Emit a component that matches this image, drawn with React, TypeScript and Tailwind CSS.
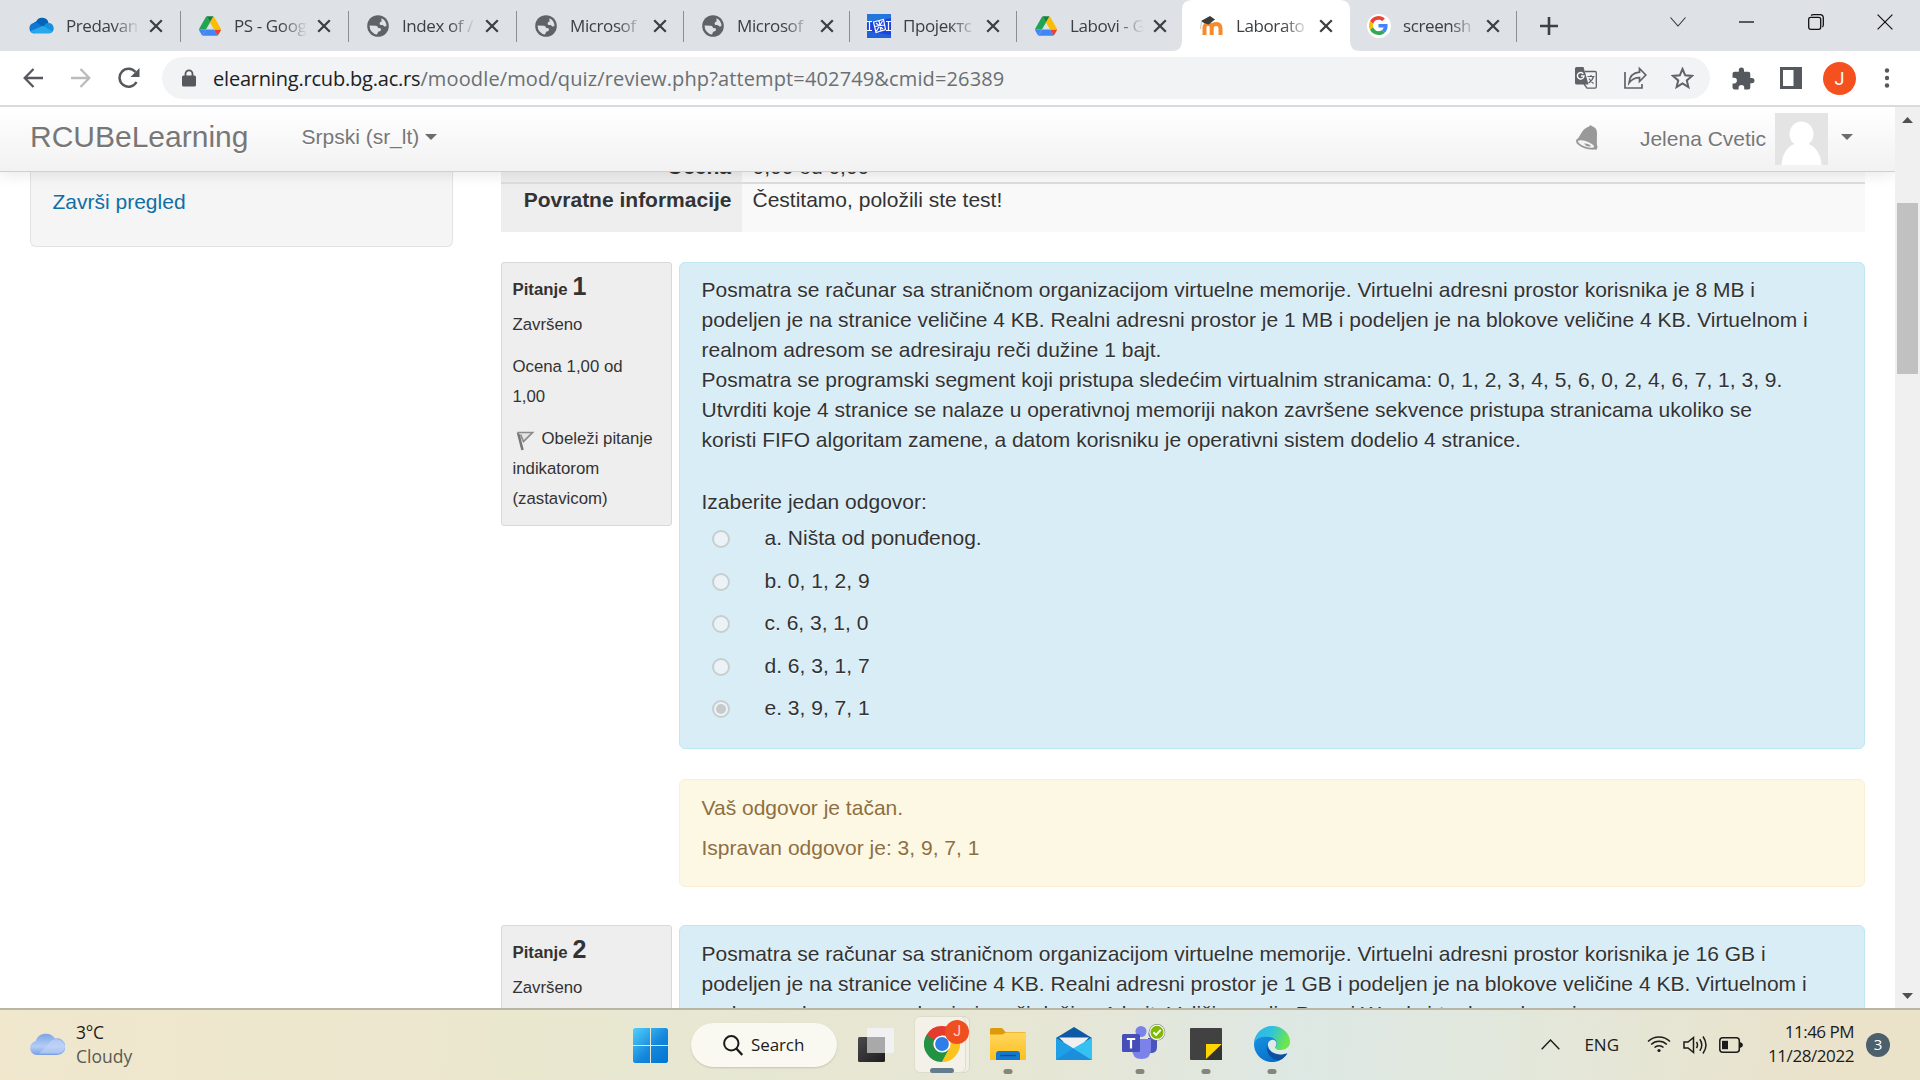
import type { ReactNode } from "react";

/* ---------- Favicons ---------- */

const OneDrive = () => (
  <svg width="25" height="17" viewBox="0 0 25 17">
    <path d="M8 4.500A7 7 0 0 1 19.500 6L13 11 4 6.500A6 6 0 0 1 8 4.500z" fill="#0364b8" />
    <path d="M7 5A6.500 6.500 0 0 1 19.500 6L14 10z" fill="#0364b8" />
    <path d="M5 6a5.600 5.600 0 0 1 4.500.8L17 11.500 5 16.500A5.300 5.300 0 0 1 5 6z" fill="#0f78d4" />
    <path d="M19.500 6.100A5.300 5.300 0 0 1 22 16l-7.500-6 2-3.200a6 6 0 0 1 3-.7z" fill="#1490df" />
    <path d="M1.500 14 14.200 8.800l9.300 5.700a4.500 4.500 0 0 1-3.500 2H6a6 6 0 0 1-4.500-2.500z" fill="#28a8ea" />
  </svg>
);

const Drive = () => (
  <svg width="22" height="20" viewBox="0 0 87.3 78">
    <path d="M6.600 66.850l3.850 6.650c.8 1.400 1.950 2.500 3.300 3.300l13.750-23.800H0c0 1.550.4 3.100 1.200 4.500z" fill="#4285f4" />
    <path d="M43.650 25 29.900 1.200c-1.350.8-2.500 1.900-3.300 3.300L1.200 48.500A9 9 0 0 0 0 53h27.500z" fill="#21a453" />
    <path d="M73.550 76.800c1.350-.8 2.500-1.900 3.300-3.300L86.100 57.500c.8-1.400 1.200-2.950 1.200-4.500H59.800l5.850 11.500z" fill="#ea4335" />
    <path d="M43.650 25 57.400 1.200C56.050.4 54.500 0 52.900 0H34.400c-1.600 0-3.150.45-4.500 1.200z" fill="#188038" />
    <path d="M59.800 53H27.500L13.750 76.800c1.350.8 2.900 1.200 4.500 1.200h50.800c1.600 0 3.150-.45 4.500-1.200z" fill="#4285f4" />
    <path d="M73.400 26.500 60.700 4.500c-.8-1.400-1.950-2.500-3.300-3.300L43.650 25 59.800 53h27.450c0-1.550-.4-3.100-1.200-4.500z" fill="#fbbc04" />
  </svg>
);

const Globe = () => (
  <svg width="22" height="22" viewBox="0 0 22 22">
    <circle cx="11" cy="11" r="10.800" fill="#5f6368" />
    <path d="M14.500 3.200c3 1.400 5 4.300 5 7.800-.7.500-1.500.6-2.400.3-.6-1-1.800-1.300-3.400-1.200-.9-.4-1.200-1.100-1-2 .2-1 .9-1.500 2-1.600-.3-1.200-.4-2.300-.2-3.300z" fill="#dee1e6" />
    <path d="M2.600 10.500l6.200.300c1.500.2 2.200 1 2.200 2.200l2.300.3c.9.500.9 1.800.1 2.600l-2.200.8-1.200 2.700A8.600 8.600 0 0 1 2.600 10.500z" fill="#dee1e6" />
  </svg>
);

const Project = () => (
  <svg width="24" height="24" viewBox="0 0 24 24">
    <rect width="24" height="24" fill="#1d44dc" />
    <path d="M0 0h24v4L0 9z" fill="#2276dc" />
    <path d="M0 24h24v-3L0 17z" fill="#1f62dc" />
    <g fill="none" stroke="#fff" strokeWidth="1.200">
      <path d="M0 7.500h5M2.500 7.500v9M0 16.500h5M19 7.500h5M21.500 7.500v9M19 16.500h5" />
      <path d="M6.500 8l10-2.500 2 10-9.500 3zM9 9l7 6M15.500 7l-6 10M7.500 12.500l10-1.500M12 6.500l2 10.500" />
    </g>
  </svg>
);

const Moodle = () => (
  <svg width="25" height="20" viewBox="0 0 25 20">
    <path d="M5.500 19v-7.500c0-5 7.200-5 7.200 0V19M12.700 12c0-5.500 8.800-5.500 8.800 0v7" fill="none" stroke="#f68b2c" strokeWidth="4" />
    <path d="M2 5 11 0l5 3.500-6.500 5L5 7z" fill="#3b3b3b" />
    <path d="M2.500 5.500 1.500 13" stroke="#d8c3ae" strokeWidth="1" />
  </svg>
);

const Google = () => (
  <span className="flex h-6 w-6 items-center justify-center rounded-full bg-white">
    <svg width="19" height="19" viewBox="0 0 48 48">
      <path fill="#EA4335" d="M24 9.500c3.540 0 6.710 1.220 9.210 3.600l6.850-6.850C35.900 2.380 30.470 0 24 0 14.620 0 6.510 5.380 2.560 13.220l7.980 6.190C12.430 13.720 17.740 9.500 24 9.500z" />
      <path fill="#4285F4" d="M46.980 24.550c0-1.570-.15-3.090-.38-4.550H24v9.020h12.940c-.58 2.960-2.260 5.480-4.780 7.180l7.730 6c4.510-4.180 7.090-10.360 7.090-17.650z" />
      <path fill="#FBBC05" d="M10.530 28.590c-.48-1.450-.76-2.990-.76-4.590s.27-3.140.76-4.590l-7.980-6.190C.92 16.460 0 20.120 0 24c0 3.880.92 7.540 2.560 10.780l7.970-6.190z" />
      <path fill="#34A853" d="M24 48c6.480 0 11.930-2.130 15.890-5.810l-7.730-6c-2.150 1.450-4.920 2.300-8.160 2.300-6.260 0-11.570-4.220-13.470-9.910l-7.980 6.190C6.510 42.620 14.620 48 24 48z" />
    </svg>
  </span>
);

/* ---------- Tab strip ---------- */

type TabInfo = { title: string; icon: ReactNode; width: string; active?: boolean; divider?: boolean };

const tabs: TabInfo[] = [
  { title: "Predavan", icon: <OneDrive />, width: "w-[168px]", divider: true },
  { title: "PS - Goog", icon: <Drive />, width: "w-[168px]", divider: true },
  { title: "Index of /", icon: <Globe />, width: "w-[168px]", divider: true },
  { title: "Microsof", icon: <Globe />, width: "w-[167px]", divider: true },
  { title: "Microsof", icon: <Globe />, width: "w-[166px]", divider: true },
  { title: "Пројектс", icon: <Project />, width: "w-[167px]", divider: true },
  { title: "Labovi - G", icon: <Drive />, width: "w-[166px]" },
  { title: "Laborato", icon: <Moodle />, width: "w-[167px]", active: true },
  { title: "screensh", icon: <Google />, width: "w-[167px]", divider: true },
];

const Cross = () => (
  <svg width="14" height="14" viewBox="0 0 14 14" className="shrink-0">
    <path d="M1.200 1.200 12.800 12.800M12.800 1.200 1.200 12.800" stroke="#3c4043" strokeWidth="2.300" />
  </svg>
);

function Tab({ title, icon, width, active, divider }: TabInfo) {
  return (
    <div className={`relative flex h-[51px] shrink-0 items-center ${width}`}>
      {active && (
        <svg className="absolute -left-[11px] top-0" width="190" height="51" viewBox="0 0 190 51">
          <path d="M0 51Q10 51 10 41V10Q10 0 20 0H168Q178 0 178 10V41Q178 51 188 51z" fill="#fff" />
        </svg>
      )}
      <div className="relative flex h-full w-full items-center">
        <span className="ml-4 flex w-[25px] shrink-0 justify-center">{icon}</span>
        <span className="ml-3 w-[76px] whitespace-nowrap text-[17px] leading-6 tracking-[-0.400px] text-[#3c4043] [mask-image:linear-gradient(to_right,#000_62%,transparent_97%)]">
          {title}
        </span>
        <span className="ml-[7px] flex">
          <Cross />
        </span>
      </div>
      {divider && <span className="absolute right-0 top-[11px] h-[31px] w-[1.500px] bg-[#8a8d91]" />}
    </div>
  );
}

function TabStrip() {
  return (
    <div className="flex h-[51px] bg-[#dee1e6] pl-[13px]">
      {tabs.map((tab, i) => (
        <Tab key={i} {...tab} />
      ))}
      <svg className="ml-[23px] mt-[17px]" width="18" height="18" viewBox="0 0 18 18">
        <path d="M9 0v18M0 9h18" stroke="#3c4043" strokeWidth="2.600" />
      </svg>
      <div className="ml-auto mr-[27px] flex h-[43px] items-center">
        <svg width="16" height="16" viewBox="0 0 16 16"><path d="M.5 3.500 8 12 15.500 3.500" fill="none" stroke="#333" strokeWidth="1.100" /></svg>
        <svg className="ml-[53px]" width="15" height="16" viewBox="0 0 15 16"><path d="M0 8h15" stroke="#111" strokeWidth="1.300" /></svg>
        <svg className="ml-[54px]" width="16" height="16" viewBox="0 0 16 16" fill="none" stroke="#111" strokeWidth="1.300">
          <rect x=".7" y="3.300" width="12" height="12" rx="2" />
          <path d="M3 1.500Q4 .7 5.500.700H12Q15.300.700 15.300 4v6.500q0 1.500-.8 2.500" />
        </svg>
        <svg className="ml-[53px]" width="16" height="16" viewBox="0 0 16 16"><path d="M.6.600 15.400 15.400M15.400.600.600 15.400" stroke="#111" strokeWidth="1.200" /></svg>
      </div>
    </div>
  );
}

/* ---------- Address bar ---------- */

function Toolbar() {
  return (
    <div className="flex h-[56px] items-center border-b-2 border-[#dadbdd] bg-white pl-[23px] pr-[30px]">
      <svg width="20" height="20" viewBox="0 0 20 20" fill="none" stroke="#55595d" strokeWidth="2.300">
        <path d="M20 10H2M10.500 1 1.700 10l8.800 9" />
      </svg>
      <svg className="ml-[28px]" width="20" height="20" viewBox="0 0 20 20" fill="none" stroke="#b9bbbd" strokeWidth="2.300">
        <path d="M0 10h18M9.500 1l8.800 9-8.800 9" />
      </svg>
      <svg className="ml-[27px]" width="22" height="22" viewBox="0 0 22 22">
        <path d="M18.500 15A9 9 0 1 1 17.500 5" fill="none" stroke="#55595d" strokeWidth="2.500" />
        <path d="M21.500 1v9h-9z" fill="#55595d" />
      </svg>
      <div className="ml-[22px] flex h-[42px] w-[1548px] items-center rounded-full bg-[#f1f3f4] pl-[20px] pr-4">
        <svg width="14" height="18" viewBox="0 0 14 18">
          <path d="M3.500 7V4.800a3.500 3.500 0 0 1 7 0V7" fill="none" stroke="#55595d" strokeWidth="1.800" />
          <rect y="6.500" width="14" height="11" rx="1.500" fill="#55595d" />
        </svg>
        <span className="ml-[17px] mt-[2px] whitespace-nowrap text-[20px] leading-[30px] text-[#6b6f73]">
          <span className="tracking-[-0.200px] text-[#202124]">elearning.rcub.bg.ac.rs</span>
          <span className="tracking-[0.130px]">/moodle/mod/quiz/review.php?attempt=402749&amp;cmid=26389</span>
        </span>
        <div className="ml-auto flex items-center">
          <svg width="22" height="22" viewBox="0 0 22 22">
            <path d="M10 4.500h10a1.300 1.300 0 0 1 1.300 1.300v14a1.300 1.300 0 0 1-1.300 1.300h-8L9 17" fill="none" stroke="#5f6368" strokeWidth="1.300" />
            <path d="M1.500 0h7l5 17.500h-12A1.500 1.500 0 0 1 0 16V1.500A1.500 1.500 0 0 1 1.500 0z" fill="#5f6368" />
            <path d="M8.300 6.700A3.300 3.300 0 1 0 9 9H6" fill="none" stroke="#fff" strokeWidth="1.400" />
            <path d="M12.500 9.500h7M16 8v1.500M18.500 9.500q-1 4-5 6.500M14 11.500q2 3.500 4.500 5" fill="none" stroke="#5f6368" strokeWidth="1.200" />
          </svg>
          <svg className="ml-[27px]" width="23" height="24" viewBox="0 -1 23 23" fill="none" stroke="#5f6368" strokeWidth="1.700">
            <path d="M1 4.500V20.500H18V16.500" />
            <path d="M15.500 1l6.300 6.500-6.300 6.500v-3.800c-4.500 0-8 1.800-10.500 5.300.5-5.800 4-10.300 10.500-10.800z" />
          </svg>
          <svg className="ml-[24px]" width="23" height="22" viewBox="0 0 23 22">
            <path d="M11.500 2l2.700 6.300 6.800.6-5.200 4.500 1.600 6.700-5.900-3.600-5.900 3.600 1.600-6.700L2 8.900l6.800-.6z" fill="none" stroke="#5f6368" strokeWidth="2" />
          </svg>
        </div>
      </div>
      <svg className="ml-[22px]" width="23" height="23" viewBox="1.500 0.500 22 22">
        <path d="M20.500 11H19V7a2 2 0 0 0-2-2h-4V3.500a2.500 2.500 0 0 0-5 0V5H4a2 2 0 0 0-2 2v3.800h1.500a2.700 2.700 0 0 1 0 5.400H2V20a2 2 0 0 0 2 2h3.800v-1.500a2.700 2.700 0 0 1 5.400 0V22H17a2 2 0 0 0 2-2v-4h1.500a2.500 2.500 0 0 0 0-5z" fill="#55595d" />
      </svg>
      <svg className="ml-[25px]" width="22" height="22" viewBox="0 0 22 22">
        <path fillRule="evenodd" d="M0 0h22v22H0zM3 3v16h10.500V3z" fill="#55595d" />
      </svg>
      <span className="ml-[21px] flex h-[33px] w-[33px] items-center justify-center rounded-full bg-[#f4511e] font-['Roboto',sans-serif] text-[18px] text-white">J</span>
      <svg className="ml-auto" width="6" height="20" viewBox="0 0 6 20" fill="#55595d">
        <circle cx="3" cy="2.500" r="2.200" /><circle cx="3" cy="10" r="2.200" /><circle cx="3" cy="17.500" r="2.200" />
      </svg>
    </div>
  );
}

/* ---------- Moodle page ---------- */

const Caret = ({ className }: { className: string }) => (
  <svg className={className} width="12" height="6" viewBox="0 0 12 6"><path d="M0 0h12L6 6z" fill="#6d6d6d" /></svg>
);

function Navbar() {
  return (
    <div className="relative z-10 flex h-[65px] shrink-0 items-center border-b border-[#d0d0d0] bg-gradient-to-b from-white to-[#f2f2f2] pb-[4px] pl-[30px] pr-[42px] text-[21px] text-[#777] shadow-[0_2px_15px_rgba(0,0,0,0.100)] [text-shadow:0_1px_0_#fff]">
      <span className="text-[30px] leading-[30px]">RCUBeLearning</span>
      <span className="ml-[53px] leading-[30px]">Srpski (sr_lt)</span>
      <Caret className="ml-[6px]" />
      <svg className="ml-auto" width="23" height="25" viewBox="0 0 23 25">
        <path d="M14 1.500 15.500 0l1.500 1.300c4 1 5.300 4.200 5 9 0 4.500-.6 8.200.5 12l-1 2.500C17 24.500 3 22 1 15c5-3 5-11 13-13.500z" fill="#999" />
        <ellipse cx="11" cy="19" rx="9.500" ry="3.600" transform="rotate(20 11 19)" fill="#f4f4f4" stroke="#999" strokeWidth="1.800" />
        <path d="M9 18.500q5-.5 7 2.500-4 1.800-7-2.500z" fill="#999" />
      </svg>
      <span className="ml-[42px] mt-[3px] leading-[30px]">Jelena Cvetic</span>
      <svg className="ml-[9px] mt-[3px]" width="53" height="52" viewBox="0 0 53 52">
        <rect width="53" height="52" fill="#e4e4e4" />
        <ellipse cx="26.500" cy="21" rx="12" ry="12.500" fill="#fff" />
        <path d="M6.500 52C7 39 15 31 21 31h11c6 0 14 8 14.500 21z" fill="#fff" />
      </svg>
      <Caret className="ml-[13px]" />
    </div>
  );
}

const Flag = () => (
  <svg className="mr-[7px] inline-block align-[-8px]" width="22" height="22" viewBox="0 0 22 22">
    <path d="M5 2.500 9.500 20" stroke="#777" strokeWidth="2.600" />
    <path d="M4.500 2.500h15L10.500 11.500 7.500 4.500" fill="#e4e4e4" stroke="#8b8b8b" strokeWidth="1.700" />
  </svg>
);

function QuestionInfo({ number }: { number: number }) {
  return (
    <div className="h-[264px] w-[171px] shrink-0 rounded-[3px] border border-[#d9d9d9] bg-[#eee] pl-[10.500px] pt-[4px] text-[16.800px] leading-[30px] text-[#333]">
      <div className="flex h-[43px] items-baseline font-bold leading-[38px]">
        Pitanje<span className="ml-[5px] text-[25px]">{number}</span>
      </div>
      <div>Završeno</div>
      <div className="mt-[12px] w-[130px]">Ocena 1,00 od 1,00</div>
      <div className="mt-[12px] w-[150px]">
        <div className="h-[30px] whitespace-nowrap"><Flag />Obeleži pitanje</div>
        indikatorom (zastavicom)
      </div>
    </div>
  );
}

function Answer({ label, checked }: { label: string; checked?: boolean }) {
  return (
    <div className="flex h-[42.500px] items-start">
      <span className="ml-[10px] mt-[7px] flex h-[18px] w-[18px] items-center justify-center rounded-full border-2 border-[#c8ced0] bg-[#ebf3f6]">
        {checked && <span className="h-[10px] w-[10px] rounded-full bg-[#c5cacc]" />}
      </span>
      <span className="ml-[35px] leading-[30px]">{label}</span>
    </div>
  );
}

const contentBox = "rounded-md border border-[#bce8f1] bg-[#d9edf7] px-[21.500px] text-[#333] [text-shadow:0_1px_0_rgba(255,255,255,0.600)]";

function Page() {
  return (
    <div className="flex min-h-0 flex-1 overflow-hidden font-['Liberation_Sans',Arial,sans-serif] text-[21px] leading-[30px] text-[#333]">
      <div className="flex min-w-0 flex-1 flex-col overflow-hidden bg-white">
        <Navbar />
        <div className="flex min-h-0 flex-1 overflow-hidden pl-[30px]">
          <div className="h-[75px] w-[423px] shrink-0 rounded-b-md border border-t-0 border-[#e3e3e3] bg-[#f5f5f5] pl-[21.500px] pt-[15px] text-[#0e6fa5]">
            Završi pregled
          </div>
          <div className="ml-[48px] w-[1364px] shrink-0">
            <div className="flex h-[10px] overflow-hidden">
              <div className="w-[241px] bg-[#eee] pr-[11px] text-right font-bold"><div className="-mt-[20px]">Ocena</div></div>
              <div className="flex-1 bg-[#fafafa] pl-[10.500px]"><div className="-mt-[20px]">0,00 od 0,00</div></div>
            </div>
            <div className="flex h-[50px] border-t-2 border-[#ddd]">
              <div className="w-[241px] bg-[#eee] pr-[10.500px] pt-px text-right font-bold">Povratne informacije</div>
              <div className="flex-1 bg-[#f9f9f9] pl-[10.500px] pt-px">Čestitamo, položili ste test!</div>
            </div>

            <div className="mt-[30px] flex gap-[7px]">
              <QuestionInfo number={1} />
              <div className="w-[1186px] shrink-0">
                <div className={`h-[487px] pt-[12px] ${contentBox}`}>
                  <p className="whitespace-nowrap">
                    Posmatra se računar sa straničnom organizacijom virtuelne memorije. Virtuelni adresni prostor korisnika je 8 MB i<br />
                    podeljen je na stranice veličine 4 KB. Realni adresni prostor je 1 MB i podeljen je na blokove veličine 4 KB. Virtuelnom i<br />
                    realnom adresom se adresiraju reči dužine 1 bajt.<br />
                    Posmatra se programski segment koji pristupa sledećim virtualnim stranicama: 0, 1, 2, 3, 4, 5, 6, 0, 2, 4, 6, 7, 1, 3, 9.<br />
                    Utvrditi koje 4 stranice se nalaze u operativnoj memoriji nakon završene sekvence pristupa stranicama ukoliko se<br />
                    koristi FIFO algoritam zamene, a datom korisniku je operativni sistem dodelio 4 stranice.
                  </p>
                  <p className="mt-[32px]">Izaberite jedan odgovor:</p>
                  <div className="mt-[6px]">
                    <Answer label="a. Ništa od ponuđenog." />
                    <Answer label="b. 0, 1, 2, 9" />
                    <Answer label="c. 6, 3, 1, 0" />
                    <Answer label="d. 6, 3, 1, 7" />
                    <Answer label="e. 3, 9, 7, 1" checked />
                  </div>
                </div>
                <div className="mt-[30px] h-[108px] rounded-md border border-[#fbeed5] bg-[#fcf8e3] px-[21.500px] pt-[13px] text-[#8f6f40] [text-shadow:0_1px_0_rgba(255,255,255,0.600)]">
                  <p>Vaš odgovor je tačan.</p>
                  <p className="mt-[10px]">Ispravan odgovor je: 3, 9, 7, 1</p>
                </div>
              </div>
            </div>

            <div className="mt-[38px] flex gap-[7px]">
              <QuestionInfo number={2} />
              <div className={`h-[487px] w-[1186px] shrink-0 pt-[13px] ${contentBox}`}>
                <p className="whitespace-nowrap">
                  Posmatra se računar sa straničnom organizacijom virtuelne memorije. Virtuelni adresni prostor korisnika je 16 GB i<br />
                  podeljen je na stranice veličine 4 KB. Realni adresni prostor je 1 GB i podeljen je na blokove veličine 4 KB. Virtuelnom i<br />
                  realnom adresom se adresiraju reči dužine 1 bajt. Veličina polja Page i Word virtuelne adrese je
                </p>
              </div>
            </div>
          </div>
        </div>
      </div>
      <div className="flex w-[25px] shrink-0 flex-col items-center bg-[#f0f0f0]">
        <svg className="mt-[10px] shrink-0" width="11" height="6" viewBox="0 0 11 6"><path d="M0 6h11L5.500 0z" fill="#505050" /></svg>
        <div className="mt-[80px] h-[171px] w-[21px] shrink-0 bg-[#c1c1c1]" />
        <svg className="mb-[9px] mt-auto shrink-0" width="11" height="6" viewBox="0 0 11 6"><path d="M0 0h11L5.500 6z" fill="#505050" /></svg>
      </div>
    </div>
  );
}

/* ---------- Taskbar ---------- */

const Dot = () => <span className="absolute bottom-[7px] left-1/2 h-[5px] w-[9px] -translate-x-1/2 rounded-full bg-[#85857b]" />;

const TaskIcon = ({ width, children, running = true }: { width: string; children: ReactNode; running?: boolean }) => (
  <div className={`relative flex h-[72px] shrink-0 items-center justify-center pb-[2px] ${width}`}>
    {children}
    {running && <Dot />}
  </div>
);

function ChromeIcon() {
  return (
    <svg width="36" height="36" viewBox="0 0 36 36">
      <path d="M18 18 2.410 9A18 18 0 0 1 33.590 9z" fill="#e33b2e" />
      <path d="M18 18 33.590 9A18 18 0 0 1 18 36z" fill="#fcc31e" />
      <path d="M18 18 18 36A18 18 0 0 1 2.410 9z" fill="#229342" />
      <path d="M18 9.500H33.800L25.500 22z" fill="#fcc31e" />
      <path d="M2.410 9 10.500 22.500 18 9.500z" fill="#e33b2e" />
      <path d="M2.410 9 10.600 22.300 18 18z" fill="#229342" />
      <path d="M25.500 22.200 18 36 14 26z" fill="#229342" />
      <path d="M25.500 22 18 36Q25 36 30 31L33 12z" fill="#fcc31e" />
      <circle cx="18" cy="18" r="8.600" fill="#fff" />
      <circle cx="18" cy="18" r="6.900" fill="#2f7de9" />
    </svg>
  );
}

function Taskbar() {
  return (
    <div className="flex h-[72px] items-center border-t-2 border-[#b9b6a6] bg-[linear-gradient(95deg,#f0e7cd_0%,#ece7ce_22%,#e6e7d3_40%,#e6e6d5_55%,#dde8e4_68%,#e3e7da_80%,#ebe2ca_96%)]">
      <div className="flex w-[633px] items-center pb-[3px] pl-[29px]">
        <svg width="36" height="24" viewBox="0 0 36 24">
          <defs>
            <linearGradient id="cloud" x1="0" y1="0" x2="0" y2="1">
              <stop offset="0" stopColor="#7ea4e6" /><stop offset=".6" stopColor="#b4cdf6" /><stop offset="1" stopColor="#789fe4" />
            </linearGradient>
          </defs>
          <path d="M7.500 23A7 7 0 0 1 6.500 9.200 11 11 0 0 1 26 6.500 8.400 8.400 0 1 1 28 23z" fill="url(#cloud)" />
          <path d="M19 13a8.500 8.500 0 0 1 16.500 1.500c0 5-3.500 7-7.500 7H10z" fill="#c3d6f7" opacity=".6" />
        </svg>
        <div className="ml-[11px] text-[17.500px] leading-6">
          <div className="tracking-[-0.300px] text-[#1c1c1c]">3°C</div>
          <div className="text-[#5b5a52]">Cloudy</div>
        </div>
      </div>
      <svg width="35" height="35" viewBox="0 0 35 35">
        <defs>
          <linearGradient id="win" x1="0" y1="0" x2="1" y2="1">
            <stop offset="0" stopColor="#51d0fb" /><stop offset=".55" stopColor="#1588dc" /><stop offset="1" stopColor="#0074d3" />
          </linearGradient>
        </defs>
        <path d="M1.500 0H17v17H0V1.500zM18 0h15.500L35 1.500V17H18zM0 18h17v17H1.500L0 33.500zM18 18h17v15.500L33.500 35H18z" fill="url(#win)" />
      </svg>
      <div className="ml-[23px] flex h-[44px] w-[146px] items-center rounded-full bg-[#f9f8f1] pl-[32px] shadow-[0_1px_2px_rgba(0,0,0,0.150)]">
        <svg width="20" height="21" viewBox="0 0 20 21" fill="none" stroke="#1b1b1b" strokeWidth="2">
          <circle cx="8.300" cy="8.300" r="7.200" /><path d="M13.300 13.500 19.300 20" strokeWidth="2.400" />
        </svg>
        <span className="ml-[8px] text-[17px] tracking-[-0.100px] text-[#1b1b1b]">Search</span>
      </div>
      <svg className="ml-[21px]" width="36" height="34" viewBox="0 0 36 34">
        <defs>
          <linearGradient id="tv" x1="0" y1="0" x2="1" y2="1"><stop offset="0" stopColor="#4a4a4a" /><stop offset="1" stopColor="#1d1d1d" /></linearGradient>
        </defs>
        <rect y="9" width="27" height="25" rx="1.500" fill="url(#tv)" />
        <rect x="9" y="0" width="27" height="25" rx="1" fill="#f1f1f1" />
        <rect x="9" y="9" width="18" height="16" fill="#a9a9a9" />
      </svg>
      <div className="relative -mt-[2px] ml-[20px] flex h-[57px] w-[56px] items-center">
        <span className="absolute right-0 top-0 h-full w-[20px] rounded-md border border-[#d8d7c8] bg-[#f0efe2]" />
        <span className="relative flex h-[57px] w-[52px] items-center justify-center rounded-md border border-[#dedccb] bg-[#f4f2e8] pl-[4px]">
          <ChromeIcon />
          <span className="absolute right-[-4px] top-[3px] flex h-6 w-6 items-center justify-center rounded-full bg-[#ee4e20] font-['Roboto',sans-serif] text-[14px] text-[#fbd3c6]">J</span>
          <span className="absolute bottom-[-1px] left-[15px] h-[5px] w-6 rounded-full bg-[#647c8b]" />
        </span>
      </div>
      <TaskIcon width="w-[76px]">
        <svg width="36" height="32" viewBox="0 0 36 32">
          <defs><linearGradient id="fold" x1="0" y1="0" x2="0" y2="1"><stop offset="0" stopColor="#ffd75e" /><stop offset="1" stopColor="#fcbf1f" /></linearGradient></defs>
          <path d="M0 1.500Q0 0 1.500 0H12l3.500 4H34.500Q36 4 36 5.500V10H0z" fill="#dd9a0b" />
          <path d="M0 6.500H12.500L16 4.500H36V30.500Q36 32 34.500 32H1.500Q0 32 0 30.500z" fill="url(#fold)" />
          <path d="M6 32V26q0-3 3-3h18q3 0 3 3v6z" fill="#1478cc" />
          <path d="M10 27.500h16" stroke="#0b4f93" strokeWidth="1.400" />
        </svg>
      </TaskIcon>
      <TaskIcon width="w-[56px]" running={false}>
        <svg className="-mt-[2px]" width="36" height="33" viewBox="0 0 36 33">
          <path d="M0 11 18 0l18 11v4H0z" fill="#0c59a5" />
          <path d="M3 10.500h30L18 25z" fill="#f1f1f1" />
          <path d="M0 10.500 36 33H0z" fill="#1f9fe6" />
          <path d="M36 10.500V33L17 21.500z" fill="#35c1f1" />
          <path d="M17 21.500 36 33H0z" fill="#1c8fdc" />
        </svg>
      </TaskIcon>
      <TaskIcon width="w-[76px]">
        <svg className="-mr-[8px] -mt-[4px]" width="44" height="36" viewBox="0 0 44 36">
          <circle cx="19" cy="7.500" r="5.500" fill="#7b83eb" />
          <path d="M26 14h9v9q0 6-6 6h-3z" fill="#4b53bc" />
          <circle cx="31" cy="10" r="4.500" fill="#4b53bc" />
          <path d="M10 15h19v10q0 10-9.500 10T10 25z" fill="#7b83eb" />
          <rect y="10" width="18" height="18" rx="1.500" fill="#464eb8" />
          <path d="M4.800 15h8.400M9 15v9.500" stroke="#fff" strokeWidth="2.200" />
          <circle cx="35" cy="8.300" r="8.300" fill="#8f8f80" />
          <circle cx="35" cy="8.300" r="7.600" fill="#fff" />
          <circle cx="35" cy="8.300" r="6.500" fill="#7fba00" />
          <path d="m31.500 8.300 2.600 2.600 4.600-5" fill="none" stroke="#fff" strokeWidth="2" />
        </svg>
      </TaskIcon>
      <TaskIcon width="w-[56px]">
        <svg width="32" height="32" viewBox="0 0 32 32">
          <rect width="32" height="32" rx="1" fill="#414141" />
          <path d="M16 16h16L16 31z" fill="#ffd500" /><path d="M32 16v16H16z" fill="#333" />
        </svg>
      </TaskIcon>
      <TaskIcon width="w-[76px]">
        <svg width="36" height="36" viewBox="0 0 36 36">
          <defs>
            <linearGradient id="e1" x1="0" y1="0" x2="1" y2=".3"><stop offset="0" stopColor="#30b3ec" /><stop offset=".5" stopColor="#2fc2df" /><stop offset="1" stopColor="#6be64c" /></linearGradient>
            <linearGradient id="e2" x1="0" y1="0" x2=".5" y2="1"><stop offset="0" stopColor="#1d9be6" /><stop offset="1" stopColor="#0670cd" /></linearGradient>
          </defs>
          <path d="M0 18A18 18 0 0 1 30 5L24 22 33 28A18 18 0 0 1 0 18z" fill="url(#e2)" />
          <path d="M0 17C1 7 9 0 18 0c11 0 18 8 18 15.500 0 5.500-4 8.500-9 8.500-4 0-6.500-1.500-5-3.500 1.500-2.500 1-6.500-3-8.500C13 9.500 3 10 0 17z" fill="url(#e1)" />
          <path d="M13 19c-1.500 7 4 15.500 12 15.500 3.500-1.500 6.500-4 8.300-7.500-3 1.300-6 1.800-9 1.300C17 27.500 13 23 13 19z" fill="#114f9c" />
          <path d="M14 17.500c1-3.500 5-5 7.500-2.500 1.500 1.800 1 4 .2 5.300-1.300 2 1 3.700 5.300 3.700 2.500 0 5-.8 6.700-2.500q2 3-.5 5.500c-4 1.800-8 1.800-11.200.8C16.500 26 13.500 22 14 17.500z" fill="#dfe9e5" />
        </svg>
      </TaskIcon>
      <div className="ml-auto flex items-center pb-px text-[17px] text-[#1b1b1b]">
        <svg width="19" height="11" viewBox="0 0 19 11"><path d="M.7 10.300 9.500 1l8.800 9.300" fill="none" stroke="#1b1b1b" strokeWidth="1.400" /></svg>
        <span className="ml-[24px]">ENG</span>
        <svg className="ml-[28px] -mt-[2px]" width="24" height="18" viewBox="0 0 24 18" fill="none" stroke="#1b1b1b" strokeWidth="1.500">
          <path d="M1 6.500a15.500 15.500 0 0 1 22 0M4.200 9.500a11 11 0 0 1 15.600 0M7.500 12.500a6.500 6.500 0 0 1 9 0" />
          <circle cx="12" cy="15.500" r="1.600" fill="#1b1b1b" stroke="none" />
        </svg>
        <svg className="ml-[12px]" width="25" height="20" viewBox="0 0 25 20" fill="none" stroke="#1b1b1b" strokeWidth="1.500">
          <path d="M1 7h4l5.500-4.500v15L5 13H1z" />
          <path d="M13.500 7q2 3 0 6M16.800 4.300q4 5.700 0 11.400M20 1.500q6 8.500 0 17" />
        </svg>
        <svg className="ml-[11px]" width="24" height="16" viewBox="0 0 24 16">
          <rect x=".8" y=".8" width="19.500" height="14.400" rx="3" fill="none" stroke="#1b1b1b" strokeWidth="1.500" />
          <rect x="3" y="3.800" width="6" height="8.400" fill="#1b1b1b" />
          <path d="M21 5q3 1 3 3t-3 3z" fill="#1b1b1b" />
        </svg>
        <div className="ml-[24px] w-[87px] pb-px text-right leading-6">
          <div className="whitespace-nowrap tracking-[-0.500px]">11:46 PM</div>
          <div className="whitespace-nowrap tracking-[-0.420px]">11/28/2022</div>
        </div>
        <span className="ml-[12px] mr-[30px] flex h-6 w-6 items-center justify-center rounded-full bg-[#4c5f6d] text-[15px] leading-none text-white">3</span>
      </div>
    </div>
  );
}

export default function App() {
  return (
    <div className="flex h-[1080px] w-[1920px] flex-col overflow-hidden bg-white font-['Open_Sans','Noto_Sans',sans-serif]">
      <TabStrip />
      <Toolbar />
      <Page />
      <Taskbar />
    </div>
  );
}
